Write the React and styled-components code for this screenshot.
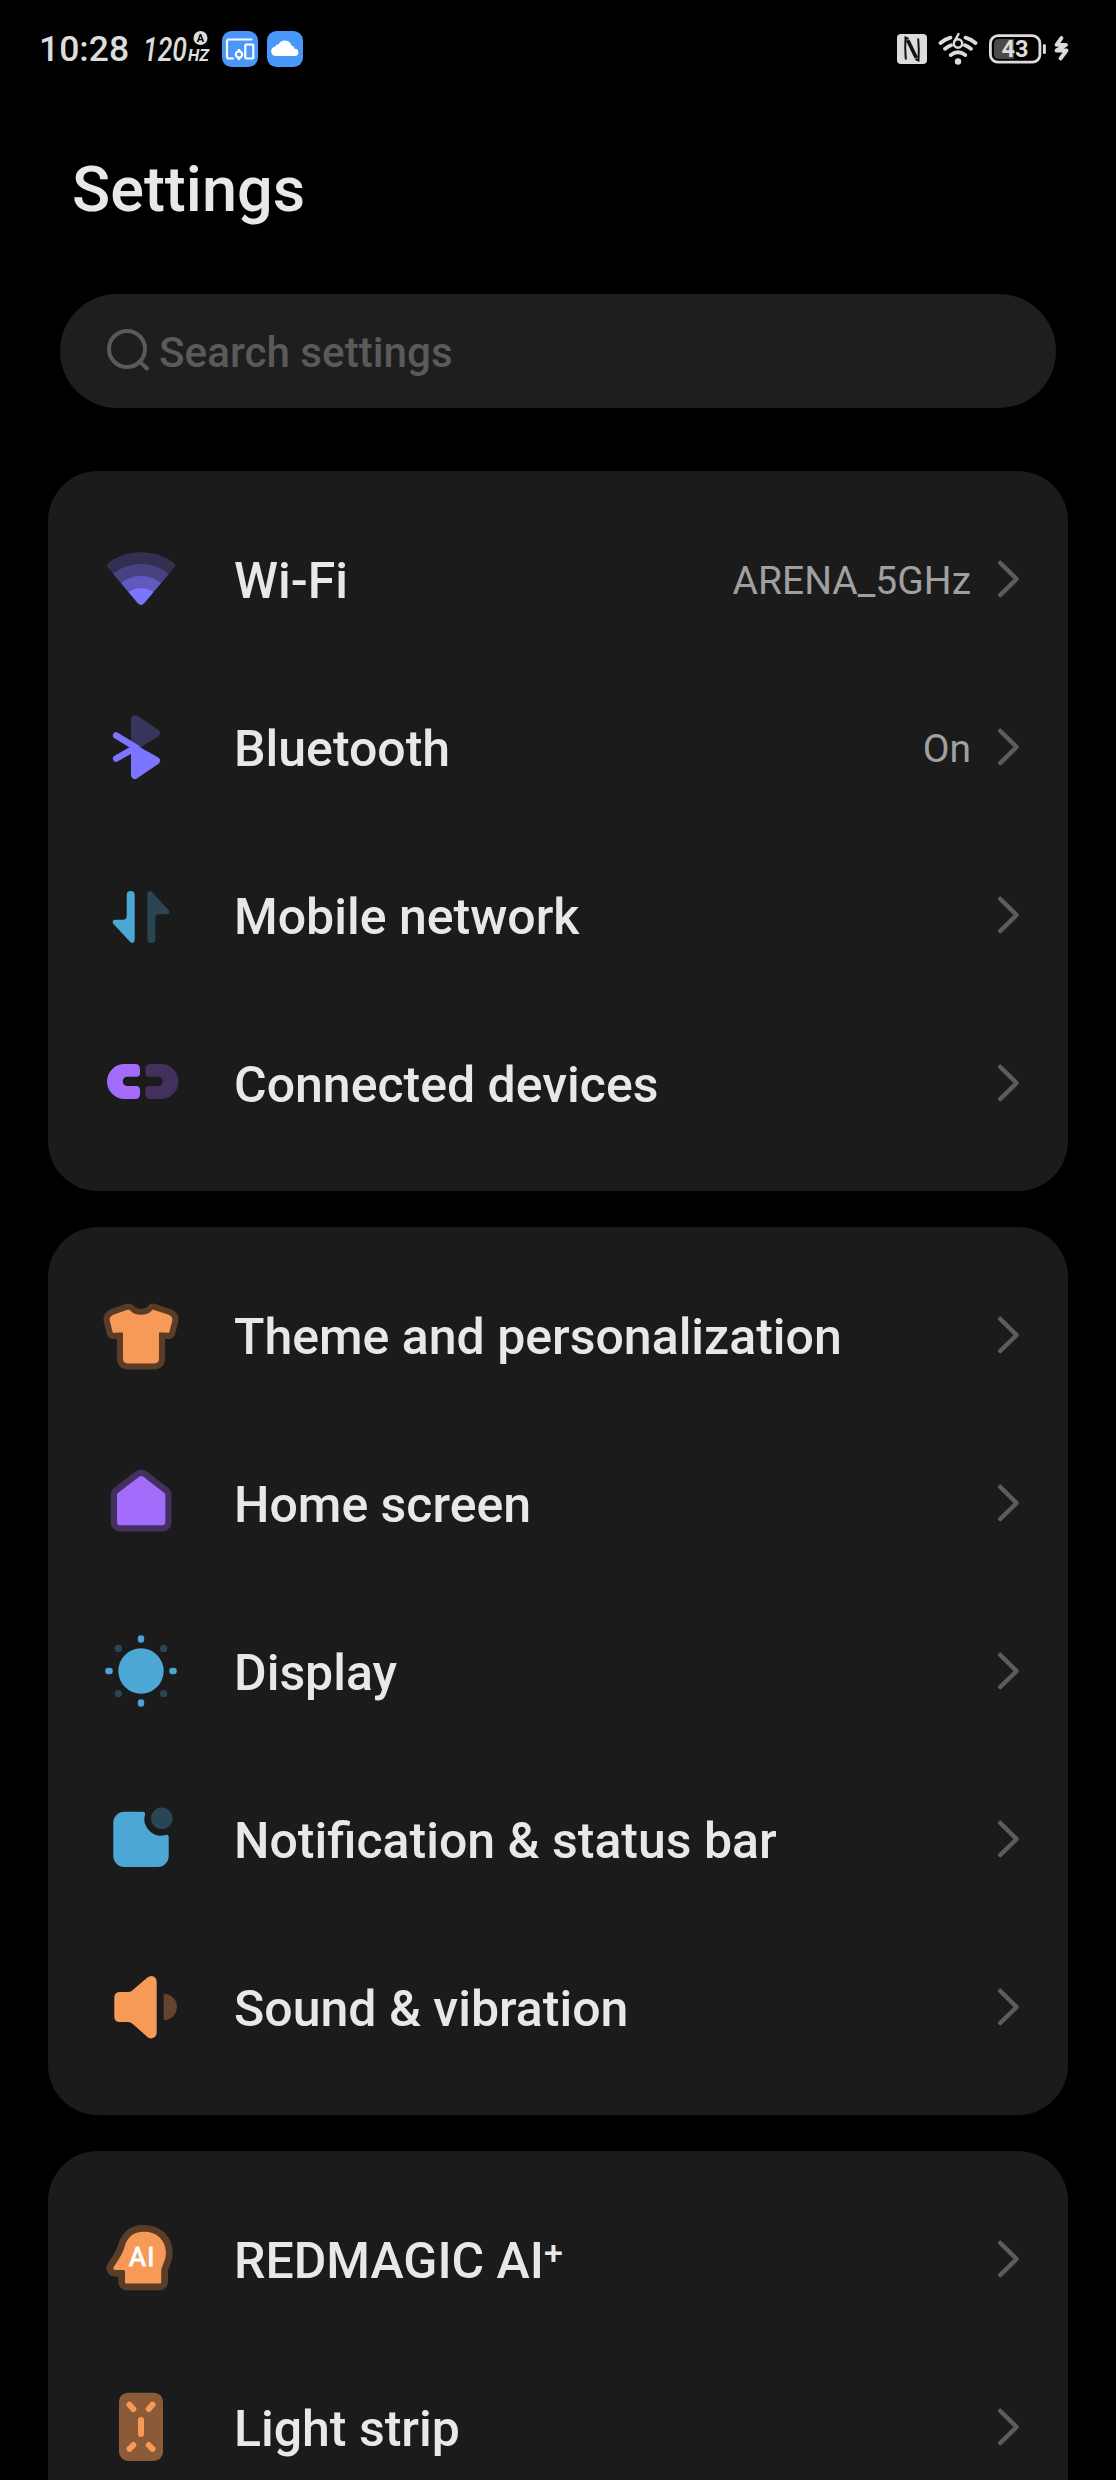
import React from 'react';
import styled, { createGlobalStyle } from 'styled-components';

const GlobalStyle = createGlobalStyle`
  * {
    box-sizing: border-box;
  }
  body {
    margin: 0;
    background: #000;
    font-family: Roboto, 'Liberation Sans', sans-serif;
    color: #e8e8e8;
  }
`;

const Screen = styled.div`
  width: 1116px;
  height: 2480px;
  overflow: hidden;
  background: #000;
`;

const StatusBar = styled.header`
  display: flex;
  justify-content: space-between;
  align-items: center;
  height: 98px;
  padding: 0 47px 0 39px;
`;

const StatusGroup = styled.div`
  display: flex;
  align-items: center;
`;

const Clock = styled.span`
  width: 104px;
  font-size: 35.5px;
  font-weight: 500;
  line-height: 42px;
  color: #dcdcdc;
`;

const StatusIcon = styled.svg`
  display: block;
  flex: none;
  margin-left: ${(props) => props.$gap || 0}px;
`;

const Title = styled.h1`
  margin: 0;
  padding: 55px 72px 0;
  height: 196px;
  font-size: 63px;
  font-weight: 500;
  line-height: 74px;
`;

const SearchBar = styled.div`
  display: flex;
  align-items: center;
  height: 114px;
  margin: 0 60px 63px;
  padding-left: 45px;
  border-radius: 57px;
  background: #1e1e1e;
  color: #5a5a5a;
`;

const SearchText = styled.span`
  padding: 3px 0 0 9px;
  font-size: 42.2px;
  font-weight: 500;
`;

const Card = styled.section`
  margin: 0 48px 36px;
  padding: 24px 47px 24px 51px;
  border-radius: 50px;
  background: #1b1b1b;
`;

const Row = styled.div`
  display: flex;
  align-items: center;
  height: 168px;
`;

const RowIcon = styled.svg`
  flex: none;
  width: 84px;
  height: 84px;
`;

const Label = styled.span`
  flex: 1;
  padding: 3px 0 0 51px;
  font-size: 50px;
  font-weight: 500;
  white-space: nowrap;
`;

const Plus = styled.sup`
  font-size: 34px;
  line-height: 0;
  vertical-align: 14px;
`;

const Value = styled.span`
  padding-top: 3px;
  margin-right: 25px;
  font-size: 39px;
  color: #a0a0a0;
`;

const Arrow = styled.svg`
  flex: none;
  width: 25px;
  height: 42px;
`;

const ORANGE = '#f79a57';
const ORANGE_DIM = '#5a3d29';
const PURPLE = '#a36bf9';
const PURPLE_DIM = '#43305f';
const BLUE = '#4ca7d4';
const BLUE_DIM = '#2a4553';
const VIOLET = '#7c75ff';

const WifiIcon = () => (
  <RowIcon viewBox="0 0 84 84">
    <clipPath id="fan">
      <path d="M38.8 66 8.8 30.6Q6.6 27.600 9.8 25.2A56 56 0 0 1 74.2 25.2Q77.4 27.600 75.2 30.6L45.2 66Q42 69.400 38.8 66Z" />
    </clipPath>
    <g clipPath="url(#fan)">
      <circle cx="42" cy="71" r="56" fill="#322f50" />
      <circle cx="42" cy="71" r="44" fill="#474382" />
      <circle cx="42" cy="71" r="32" fill="#5f5abc" />
      <circle cx="42" cy="71" r="20" fill={VIOLET} />
    </g>
  </RowIcon>
);

const BluetoothIcon = () => (
  <RowIcon viewBox="0 0 84 84" strokeLinecap="round" strokeLinejoin="round">
    <path d="M36 14.2 57 28 36 41Z" fill="#38355c" stroke="#38355c" strokeWidth="8" />
    <path d="M36 44 57 55.7 36 70Z" fill={VIOLET} stroke={VIOLET} strokeWidth="8" />
    <path d="M17.2 30.5 38 43.2M17.2 53.5 36 42.8" stroke={VIOLET} strokeWidth="6.6" />
  </RowIcon>
);

const networkArrow =
  'M35.7 22a4 4 0 0 0-8 0V43Q27.7 46.7 24 46.7H16.2Q12 47.4 14.5 51L31.2 69Q35 71.6 35.7 67Z';

const NetworkIcon = () => (
  <RowIcon viewBox="0 0 84 84">
    <path d={networkArrow} fill={BLUE} />
    <path d={networkArrow} fill={BLUE_DIM} transform="rotate(180 42 44)" />
  </RowIcon>
);

const linkHalf =
  'M25.5 23H36Q41 23 41 28V32Q41 35.7 37.5 35.7H28.4a4.65 4.65 0 0 0 0 9.3H37.5Q41 45 41 49V53Q41 58 36 58H25.5A17.5 17.5 0 0 1 25.5 23Z';

const LinkIcon = () => (
  <RowIcon viewBox="0 0 84 84">
    <path d={linkHalf} fill={PURPLE} />
    <path d={linkHalf} fill={PURPLE_DIM} transform="translate(87.4 0) scale(-1 1)" />
  </RowIcon>
);

const shirt =
  'M28.8 18 14 23.2Q11.6 24.4 11.8 27L14.8 38.6 25.2 38V65.5Q25.2 69.2 29 69.2H55Q58.8 69.2 58.8 65.5V38L69.2 38.6 72.2 27Q72.4 24.4 70 23.2L54 18Q50 23 42 23T30 18Z';

const ShirtIcon = () => (
  <RowIcon viewBox="0 0 84 84" strokeLinejoin="round">
    <path d={shirt} fill={ORANGE_DIM} stroke={ORANGE_DIM} strokeWidth="14.6" />
    <path d={shirt} fill={ORANGE} stroke={ORANGE} strokeWidth="2.4" />
  </RowIcon>
);

const house = 'M42.2 18 21 34.2V61.2H63.3V34.2Z';

const HouseIcon = () => (
  <RowIcon viewBox="0 0 84 84" strokeLinejoin="round">
    <path d={house} fill={PURPLE_DIM} stroke={PURPLE_DIM} strokeWidth="18.6" />
    <path d={house} fill={PURPLE} stroke={PURPLE} strokeWidth="6" />
  </RowIcon>
);

const SunIcon = () => (
  <RowIcon viewBox="0 0 84 84">
    <circle cx="42" cy="42" r="22.7" fill={BLUE} />
    <g stroke={BLUE} strokeWidth="6.4" strokeLinecap="round">
      <path d="M42 9.400v1.2M42 73.400v1.2M9.400 42h1.2M73.400 42h1.2" />
    </g>
    <g fill={BLUE_DIM}>
      <circle cx="19.4" cy="19.4" r="3.7" />
      <circle cx="64.6" cy="19.4" r="3.7" />
      <circle cx="19.4" cy="64.6" r="3.7" />
      <circle cx="64.6" cy="64.6" r="3.7" />
    </g>
  </RowIcon>
);

const NotificationIcon = () => (
  <RowIcon viewBox="0 0 84 84">
    <path
      d="M25.3 14.7H44Q46.2 14.7 46.1 17A16.7 16.7 0 0 0 67 37.8Q69.7 37.4 69.7 39.8V59A11 11 0 0 1 58.7 70H25.3A11 11 0 0 1 14.3 59V25.7A11 11 0 0 1 25.3 14.7Z"
      fill={BLUE}
    />
    <circle cx="62.8" cy="21.3" r="10.8" fill={BLUE_DIM} />
  </RowIcon>
);

const SoundIcon = () => (
  <RowIcon viewBox="0 3.300 84 84">
    <path
      d="M21 30.3H29Q31.4 30.3 33.2 28.8L48.4 15.8Q52 13 55.5 15.4 57.7 17 57.7 20V71Q57.7 74 55.5 75.6 52 78 48.4 75.2L33.2 61.9Q31.4 60.4 29 60.4H21Q15.3 60.4 15.3 54.7V36Q15.3 30.3 21 30.3Z"
      fill={ORANGE}
    />
    <path d="M64.7 32A13.2 13.2 0 0 1 64.7 58.4Z" fill="#65432e" />
  </RowIcon>
);

const head =
  'M45 16C33.500 16 28.500 22.500 26.300 31.500C25 37 21.500 42 15.600 50.800Q15.200 51.800 16.500 51.800H24.500Q27.200 51.800 27.200 54.500V65.200H61V54C61 47.500 65.700 45.500 65.700 36.500C65.700 24 57.500 16 45 16Z';

const AiIcon = () => (
  <RowIcon viewBox="0 0 84 84" strokeLinejoin="round">
    <path d={head} fill={ORANGE_DIM} stroke={ORANGE_DIM} strokeWidth="16" />
    <path d={head} fill={ORANGE} stroke={ORANGE} strokeWidth="2.4" />
    <text
      x="30"
      y="49.300"
      letterSpacing="1.2"
      fontSize="26"
      fill="#fff"
      stroke="#fff"
      strokeWidth="1"
    >
      AI
    </text>
  </RowIcon>
);

const StripIcon = () => (
  <RowIcon viewBox="0 0 84 84">
    <rect x="20" y="7.7" width="44" height="68.3" rx="9" fill="#8b5a39" />
    <path
      d="M30.500 19.800 34.300 24M53.500 19.800 49.700 24M42 35V49M34.300 60 30.500 63.800M49.700 60 53.500 63.800"
      stroke={ORANGE}
      strokeWidth="6"
      strokeLinecap="round"
    />
  </RowIcon>
);

const groups = [
  [
    { label: 'Wi-Fi', Icon: WifiIcon, value: 'ARENA_5GHz' },
    { label: 'Bluetooth', Icon: BluetoothIcon, value: 'On' },
    { label: 'Mobile network', Icon: NetworkIcon },
    { label: 'Connected devices', Icon: LinkIcon },
  ],
  [
    { label: 'Theme and personalization', Icon: ShirtIcon },
    { label: 'Home screen', Icon: HouseIcon },
    { label: 'Display', Icon: SunIcon },
    { label: 'Notification & status bar', Icon: NotificationIcon },
    { label: 'Sound & vibration', Icon: SoundIcon },
  ],
  [
    { label: 'REDMAGIC AI', plus: true, Icon: AiIcon },
    { label: 'Light strip', Icon: StripIcon },
  ],
];

const Status = () => (
  <StatusBar>
    <StatusGroup>
      <Clock>10:28</Clock>
      <StatusIcon width="68" height="46" viewBox="0 -5 68 46" fill="#dcdcdc">
        <text x="0" y="30" fontSize="34" fontWeight="500" fontStyle="italic" textLength="44" lengthAdjust="spacingAndGlyphs">
          120
        </text>
        <text x="45" y="30" fontSize="17" fontWeight="700" fontStyle="italic" textLength="21" lengthAdjust="spacingAndGlyphs">
          HZ
        </text>
        <circle cx="57.500" cy="7" r="7" />
        <text x="57.500" y="11" fontSize="11" fontWeight="700" textAnchor="middle" fill="#000">
          A
        </text>
      </StatusIcon>
      <StatusIcon $gap={11} width="36" height="36" viewBox="0 0 36 36" fill="none" stroke="#fff" strokeWidth="2.2">
        <rect width="36" height="36" rx="9.500" fill="#4a97fb" stroke="none" />
        <path d="M29.500 8.500H7Q5 8.500 5 10.500V25.500Q5 27.500 7 27.500H11" strokeLinecap="round" />
        <rect x="23.300" y="13.500" width="8" height="14" rx="1" />
        <circle cx="17" cy="23.500" r="3.200" />
        <path d="M15.800 19H18.200M15.800 28H18.200" strokeWidth="1.800" />
      </StatusIcon>
      <StatusIcon $gap={9} width="36" height="36" viewBox="0 0 36 36">
        <rect width="36" height="36" rx="9.500" fill="#4a97fb" />
        <path d="M8.500 25a4.700 4.700 0 0 1-.5-9.300 4 4 0 0 1 3.500-2.400 7 7 0 0 1 13 1.200 4 4 0 0 1 3.200 3.200A3.700 3.700 0 0 1 28.500 25Z" fill="#fff" />
      </StatusIcon>
    </StatusGroup>
    <StatusGroup>
      <StatusIcon width="30" height="30" viewBox="0 0 30 30">
        <rect width="30" height="30" rx="4" fill="#dcdcdc" />
        <path d="M11.500 5 8.500 3.500Q7.800 14 8.800 25.500M10 6.500 18.500 24M18.500 25 21.500 26.500Q22.200 16 21.200 4.500M20 23.500 11.500 6" fill="none" stroke="#111" strokeWidth="2" />
      </StatusIcon>
      <StatusIcon $gap={11} width="40" height="36" viewBox="0 0 40 36" fill="none" stroke="#dcdcdc" strokeWidth="3.800" strokeLinecap="round">
        <path d="M2.500 12Q7 8 12.500 6.600M27.500 6.600Q33 8 37.500 12M7 17.800Q9.500 15.500 13 14.200M27 14.200Q30.500 15.500 33 17.800M12.800 24Q20 18.500 27.200 24" />
        <circle cx="20" cy="30.500" r="3.200" fill="#dcdcdc" stroke="none" />
        <circle cx="20" cy="12.500" r="4.200" strokeWidth="2.500" />
        <path d="M16.300 10.500 20.500 3" strokeWidth="2.500" />
      </StatusIcon>
      <StatusIcon $gap={11} width="58" height="30" viewBox="0 0 58 30">
        <rect x="1.400" y="1.700" width="49.500" height="26.500" rx="7.500" fill="none" stroke="#dcdcdc" strokeWidth="2.800" />
        <path d="M10 5H25V25H10Q5 25 5 20V10Q5 5 10 5Z" fill="#4a4a4a" />
        <path d="M55.400 11.500V18.500" stroke="#dcdcdc" strokeWidth="3" strokeLinecap="round" />
        <text x="26" y="23" fontSize="23.500" fontWeight="700" textAnchor="middle" fill="#dcdcdc">
          43
        </text>
      </StatusIcon>
      <StatusIcon $gap={6} width="16" height="28" viewBox="0 0 16 28">
        <path d="M8.500 3 3.500 9.800H13L3.500 15.500H13.500L7.500 23.500" fill="none" stroke="#dcdcdc" strokeWidth="3.800" strokeLinecap="round" strokeLinejoin="round" />
      </StatusIcon>
    </StatusGroup>
  </StatusBar>
);

const App = () => {
  return (
    <>
      <GlobalStyle />
      <Screen>
        <Status />
        <Title>Settings</Title>
        <SearchBar>
          <StatusIcon width="45" height="48" viewBox="0 0 45 48" fill="none" stroke="#5a5a5a" strokeWidth="4">
            <circle cx="22" cy="22" r="18" />
            <path d="M34.500 34.500 42 41.500" strokeLinecap="round" />
          </StatusIcon>
          <SearchText>Search settings</SearchText>
        </SearchBar>
        {groups.map((rows) => (
          <Card key={rows[0].label}>
            {rows.map(({ label, Icon, value, plus }) => (
              <Row key={label}>
                <Icon />
                <Label>
                  {label}
                  {plus && <Plus>+</Plus>}
                </Label>
                {value && <Value>{value}</Value>}
                <Arrow viewBox="0 0 25 42">
                  <path
                    d="M4.300 5 20.500 21 4.300 37"
                    fill="none"
                    stroke="#5c5c5c"
                    strokeWidth="4.500"
                    strokeLinecap="round"
                    strokeLinejoin="round"
                  />
                </Arrow>
              </Row>
            ))}
          </Card>
        ))}
      </Screen>
    </>
  );
};

export default App;
